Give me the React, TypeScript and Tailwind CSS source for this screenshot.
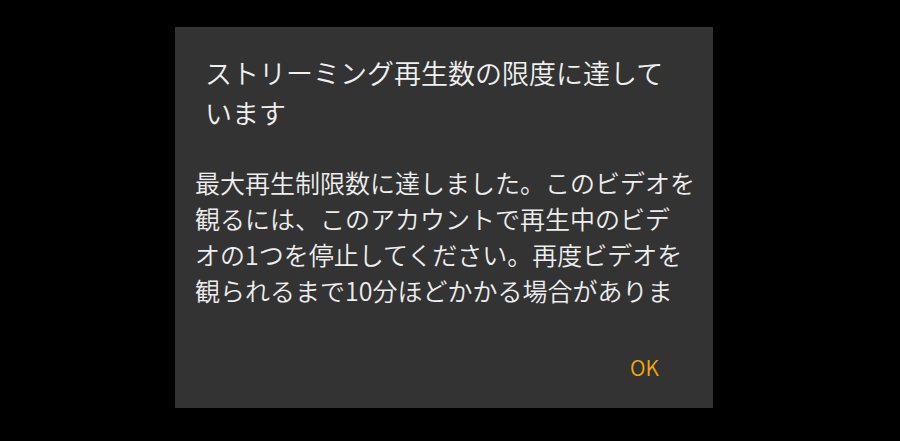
const jp = { fontFamily: '"Noto Sans CJK JP", "Noto Sans", sans-serif' };

export default function App() {
  return (
    <div className="min-h-screen w-full bg-black pt-[27px] pl-[175px]" style={jp}>
      <div className="flex h-[381px] w-[538px] flex-col bg-[#333333]">
        <h1 className="pt-[26px] pl-[30px] pr-[32px] text-[27px] leading-[40px] font-[350] text-[#f0f0f0]">
          ストリーミング再生数の限度に達して
          <br />
          います
        </h1>

        <div className="mt-[31px] h-[144px] overflow-hidden pl-[20px] text-[25px] leading-[36px] font-[350] text-[#eeeeee]">
          最大再生制限数に達しました。このビデオを
          <br />
          観るには、このアカウントで再生中のビデ
          <br />
          オの1つを停止してください。再度ビデオを
          <br />
          観られるまで10分ほどかかる場合がありま
        </div>

        <div className="mt-[44px] flex justify-end pr-[54px]">
          <button type="button" className="text-[21px] leading-[30px] font-[350] text-[#f5a80c]">
            OK
          </button>
        </div>
      </div>
    </div>
  );
}
